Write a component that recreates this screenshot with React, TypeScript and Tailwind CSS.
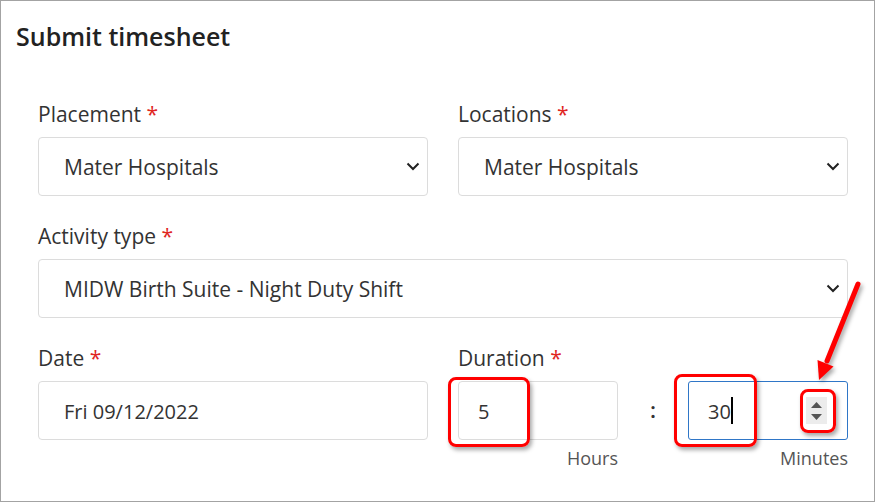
import React from 'react';

const font = { fontFamily: '"Open Sans", "Noto Sans", sans-serif' };

function Label({ text }: { text: string }) {
  return (
    <div className="h-[26px] mb-[10px] text-[21px] leading-[26px] text-[#333]">
      {text} <span className="text-[#e0261f]">*</span>
    </div>
  );
}

function Chevron() {
  return (
    <svg width="14" height="9" viewBox="0 0 14 9" className="shrink-0">
      <path d="M1.5 1.5 L7 7 L12.5 1.5" fill="none" stroke="#222" strokeWidth="2" />
    </svg>
  );
}

function SelectBox({ value }: { value: string }) {
  return (
    <div className="h-[59px] flex items-center justify-between pl-[25px] pr-[7px] border border-[#dcdcdc] rounded-[4px] bg-white text-[21px] text-[#333]">
      <span className="pt-[3px]">{value}</span>
      <Chevron />
    </div>
  );
}

function RedBox({ className }: { className: string }) {
  return (
    <div
      className={`absolute border-[3px] border-[#f00] rounded-[8px] shadow-[2px_3px_4px_rgba(0,0,0,0.35)] pointer-events-none ${className}`}
    />
  );
}

export default function App() {
  return (
    <div style={font} className="relative w-[875px] h-[502px] border border-[#a3a3a3] bg-white">
      <h1 className="pl-[15px] pt-[20px] text-[25px] leading-[30px] font-semibold text-[#222]">
        Submit timesheet
      </h1>

      <div className="pl-[37px] pr-[26px] pt-[50px] flex flex-col gap-[27px]">
        <div className="grid grid-cols-2 gap-[30px]">
          <div>
            <Label text="Placement" />
            <SelectBox value="Mater Hospitals" />
          </div>
          <div>
            <Label text="Locations" />
            <SelectBox value="Mater Hospitals" />
          </div>
        </div>

        <div>
          <Label text="Activity type" />
          <SelectBox value="MIDW Birth Suite - Night Duty Shift" />
        </div>

        <div className="grid grid-cols-2 gap-[30px]">
          <div>
            <Label text="Date" />
            <div className="h-[59px] flex items-center pl-[25px] pt-[3px] border border-[#dcdcdc] rounded-[4px] text-[20px] text-[#333]">
              Fri 09/12/2022
            </div>
          </div>
          <div>
            <Label text="Duration" />
            <div className="flex items-center">
              <div className="relative w-[160px]">
                <div className="h-[59px] flex items-center pl-[19px] pt-[3px] border border-[#dcdcdc] rounded-[4px] text-[20px] text-[#333]">
                  5
                </div>
                <RedBox className="-left-[10px] -top-[4px] w-[82px] h-[70px]" />
              </div>
              <div className="flex-1 text-center text-[22px] font-semibold text-[#333] -mt-[2px]">:</div>
              <div className="relative w-[160px]">
                <div className="h-[59px] flex items-center pl-[19px] pr-[20px] border border-[#2f76c7] rounded-[3px] text-[20px] text-[#333]">
                  <span className="pt-[3px]">30</span>
                  <span className="w-[2px] h-[27px] bg-black" />
                  <div className="ml-auto w-[21px] h-[27px] bg-[#ececec] flex flex-col items-center justify-center gap-[6px]">
                    <svg width="11" height="6" viewBox="0 0 11 6">
                      <path d="M0 6 L5.5 0 L11 6 Z" fill="#555" />
                    </svg>
                    <svg width="11" height="6" viewBox="0 0 11 6">
                      <path d="M0 0 L5.5 6 L11 0 Z" fill="#555" />
                    </svg>
                  </div>
                </div>
                <RedBox className="-left-[14px] -top-[7px] w-[83px] h-[73px]" />
                <RedBox className="left-[112px] top-[8px] w-[36px] h-[44px]" />
              </div>
            </div>
            <div className="flex mt-[6px] text-[18px] leading-[24px] text-[#555]">
              <div className="w-[160px] text-right">Hours</div>
              <div className="flex-1" />
              <div className="w-[160px] text-right">Minutes</div>
            </div>
          </div>
        </div>
      </div>

      <svg
        className="absolute left-0 top-0 pointer-events-none"
        width="876"
        height="503"
        style={{ filter: 'drop-shadow(2px 3px 2px rgba(0,0,0,0.35))' }}
      >
        <line x1="857" y1="283" x2="826" y2="360" stroke="#f00" strokeWidth="5" strokeLinecap="round" />
        <polygon points="818,379 832.5,365.5 816.5,359" fill="#f00" />
      </svg>
    </div>
  );
}
